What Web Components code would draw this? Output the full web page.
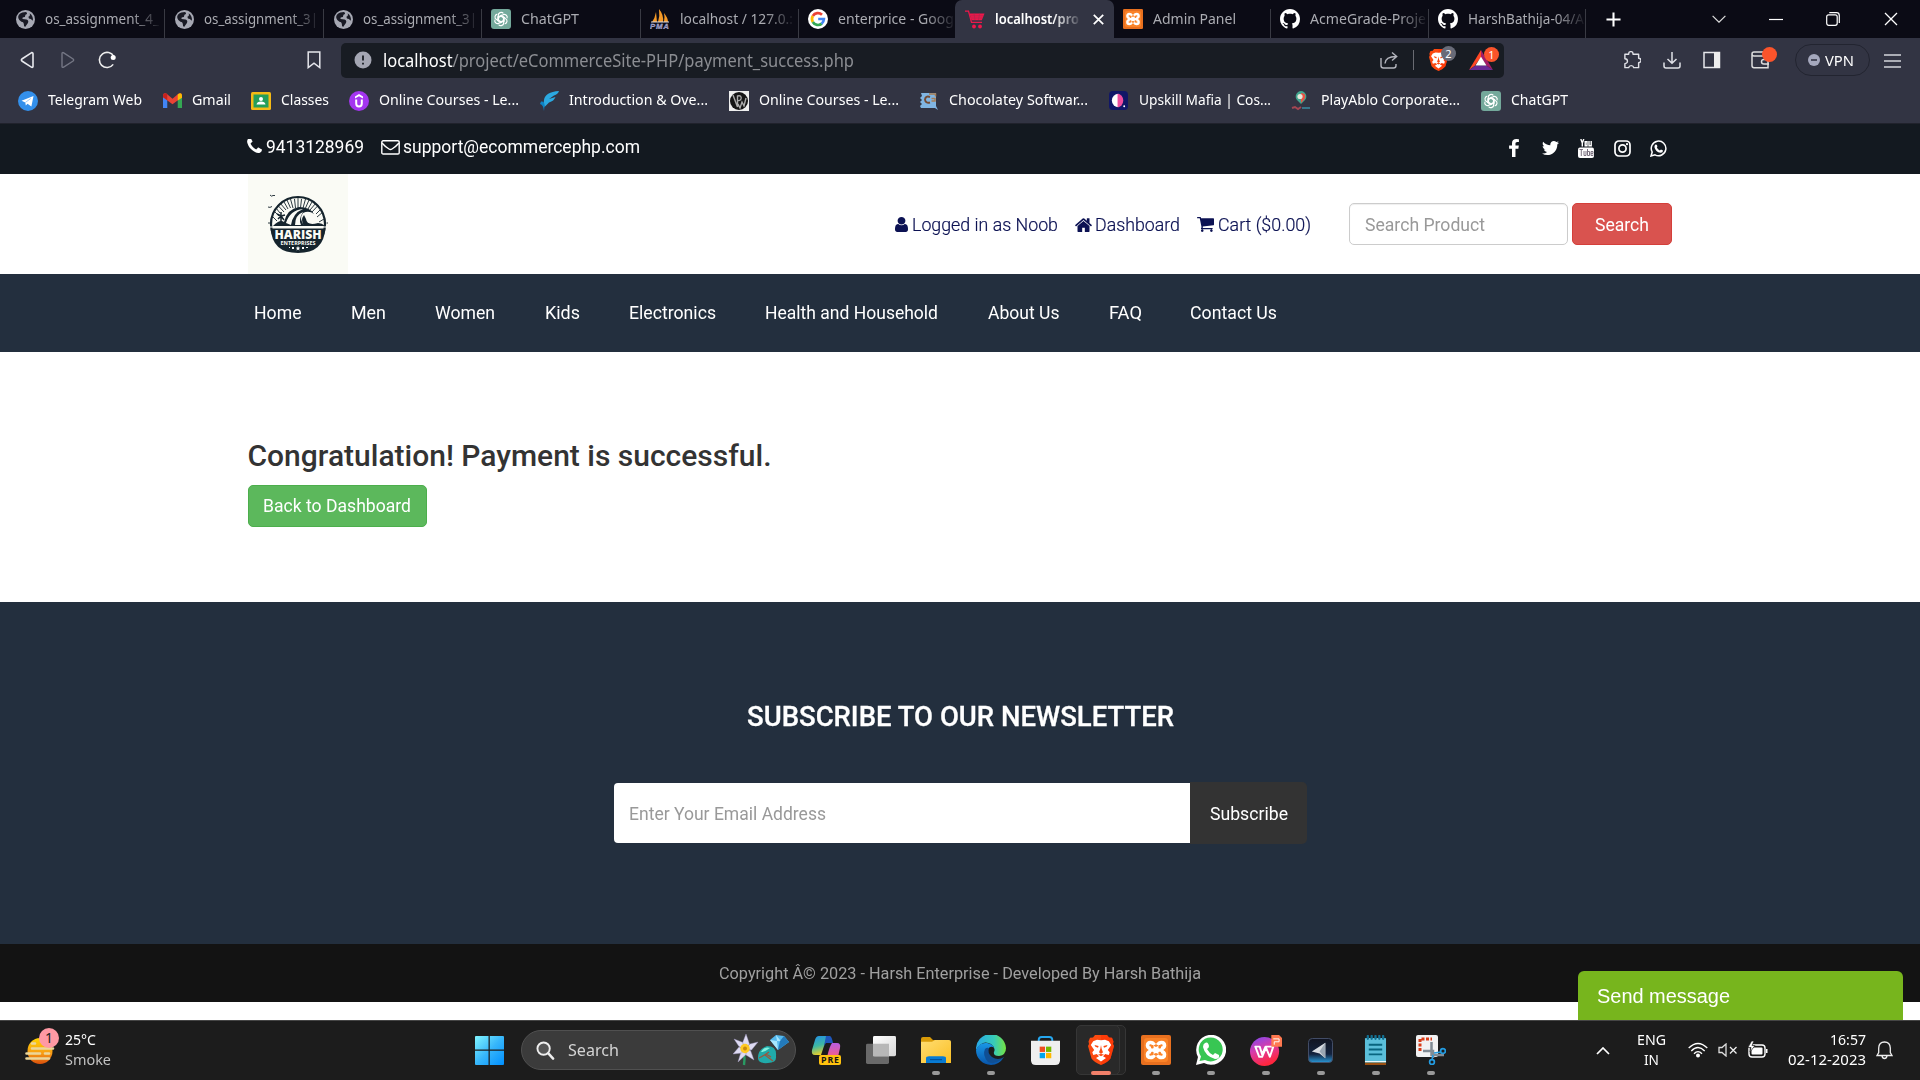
<!DOCTYPE html>
<html lang="en">
<head>
<meta charset="utf-8">
<title>localhost/project/eCommerceSite-PHP/payment_success.php</title>
<style>
html,body{margin:0;height:100%}
body{width:1920px;height:1080px;overflow:hidden;background:#fff;font-family:Roboto,sans-serif}
</style>
</head>
<body>
<desktop-screen></desktop-screen>
<script>
const ICONS = {
globe:['0 0 20 20','<circle cx="10" cy="10" r="10" fill="#a6a8b3"/><path d="M2.4 8.5Q1.6 4 6.6 2.5L10.5 2Q13 3.5 10 5L9.3 7.3Q6 7.4 7 9.6L11 10Q14 11 12.4 14L9.6 18Q8 17 8.2 14.4Q8 12.6 5.7 12.4Q3 11 2.4 8.5M14.3 3.4Q18.6 6.6 17.7 11.4L15.6 9.6Q13 9.5 13 7.2Q15.5 6.4 14.3 3.4" fill="#191a25"/>'],
gpt:['0 0 20 20','<rect width="20" height="20" rx="3" fill="#74a99b"/><g fill="none" stroke="#fff" stroke-width="1.15"><g id="k"><path d="M7.3 10.2V6.5A2.9 2.9 0 0 1 12.4 4.4M7.5 8.6L10.7 6.8L14 8.7"/></g><use href="#k" transform="rotate(60 10 10)"/><use href="#k" transform="rotate(120 10 10)"/><use href="#k" transform="rotate(180 10 10)"/><use href="#k" transform="rotate(240 10 10)"/><use href="#k" transform="rotate(300 10 10)"/></g>'],
pma:['0 0 20 20','<path d="M2 13Q5 9 6 3L7 13zM8 13Q10 7 9 0Q14 6 13 13zM14 13Q15 8 14 4Q18 9 18 13z" fill="#f59a27"/><path d="M1 13H19" stroke="#d9dae8" stroke-width="1"/><text x="0" y="20" font-family="Liberation Sans" font-weight="700" font-size="7.8" font-style="italic" fill="#7476a8" stroke="#c9c9e5" stroke-width=".3" textLength="19">PMA</text>'],
google:['0 0 20 20','<circle cx="10" cy="10" r="10" fill="#fff"/><g fill="none" stroke-width="2.7"><path d="M14 5.7A6 6 0 0 0 4.8 7" stroke="#ea4335"/><path d="M4.8 7A6 6 0 0 0 4.8 13" stroke="#fbbc05"/><path d="M4.8 13A6 6 0 0 0 13.8 14.6" stroke="#34a853"/><path d="M13.6 14.7Q15.8 13 15.9 10H10.2" stroke="#4285f4"/></g>'],
redcart:['0 0 20 20','<path d="M0 2.200H3.500L6.500 13.300H17" fill="none" stroke="#ee174b" stroke-width="1.300"/><path d="M4.500 4.500H19.500L16.800 11.300H6.500z" fill="#ee174b"/><path d="M5.500 6.800H18.500M6 9H17.500M9 4.500L10 11M14.500 4.500L13.500 11" stroke="#a9284d" stroke-width=".6"/><circle cx="9" cy="17.500" r="1.900" fill="#ee174b"/><circle cx="15" cy="17.500" r="1.900" fill="#ee174b"/>'],
xampp:['0 0 30 30','<rect width="30" height="30" rx="2" fill="#e8701f"/><rect x="3" y="3" width="24" height="24" rx="3" fill="#fb8328"/><path d="M10.2 11.2Q15 17 19.8 11.2M10.2 18.8Q15 13 19.8 18.8M10 15H20" stroke="#fff" stroke-width="4.2" fill="none"/><g fill="none" stroke="#fff" stroke-width="3.6"><path d="M13 14L10.5 14Q6.5 13 6.5 10.5Q6.5 7.5 9.5 7.5Q12 7.5 13.5 10M17 14L19.5 14Q23.5 13 23.5 10.5Q23.5 7.5 20.5 7.5Q18 7.5 16.5 10M13 16L10.5 16Q6.5 17 6.5 19.5Q6.5 22.5 9.5 22.5Q12 22.5 13.5 20M17 16L19.5 16Q23.5 17 23.5 19.5Q23.5 22.5 20.5 22.5Q18 22.5 16.5 20"/></g><rect x="10" y="10" width="2.6" height="3.4" rx="1" fill="#fb8328"/><rect x="17.4" y="10" width="2.6" height="3.4" rx="1" fill="#fb8328"/><rect x="10" y="16.8" width="2.6" height="3.4" rx="1" fill="#fb8328"/><rect x="17.4" y="16.8" width="2.6" height="3.4" rx="1" fill="#fb8328"/>'],
github:['0 0 16 16','<path fill="#fff" d="M8 0C3.58 0 0 3.58 0 8c0 3.54 2.29 6.53 5.47 7.59.4.07.55-.17.55-.38 0-.19-.01-.82-.01-1.49-2.01.37-2.53-.49-2.69-.94-.09-.23-.48-.94-.82-1.13-.28-.15-.68-.52-.01-.53.63-.01 1.08.58 1.23.82.72 1.21 1.87.87 2.33.66.07-.52.28-.87.51-1.07-1.78-.2-3.64-.89-3.64-3.95 0-.87.31-1.59.82-2.15-.08-.2-.36-1.02.08-2.12 0 0 .67-.21 2.2.82.64-.18 1.32-.27 2-.27s1.36.09 2 .27c1.53-1.04 2.2-.82 2.2-.82.44 1.1.16 1.92.08 2.12.51.56.82 1.27.82 2.15 0 3.07-1.87 3.75-3.65 3.95.29.25.54.73.54 1.48 0 1.07-.01 1.93-.01 2.2 0 .21.15.46.55.38A8.01 8.01 0 0 0 16 8c0-4.42-3.58-8-8-8"/>'],
close:['0 0 14 14','<path d="M1 1L13 13M13 1L1 13" stroke="currentColor" stroke-width="var(--sw,1.3)"/>'],
plus:['0 0 16 16','<path d="M8 .5V15.5M.5 8H15.5" stroke="#fff" stroke-width="2.2"/>'],
chev:['0 0 14 8','<path d="M.6 .8L7 7.2L13.4 .8" stroke="#ddd" stroke-width="1.2" fill="none"/>'],
min:['0 0 14 14','<path d="M0 7.5H14" stroke="#fff" stroke-width="1.2"/>'],
restore:['0 0 14 14','<path d="M3.3 .7H10.5Q13.3 .7 13.3 3.5V11" stroke="#fff" stroke-width="1.2" fill="none"/><rect x=".7" y="2.8" width="10.5" height="10.5" rx="2" stroke="#fff" stroke-width="1.2" fill="none"/>'],
back:['0 0 14 18','<path d="M11.7 1.6L1.9 8Q.8 9 1.9 10L11.7 16.3Q13 16.6 13 15.2V2.7Q13 1.4 11.7 1.6z" stroke="#e8e9ee" stroke-width="1.6" fill="none"/>'],
fwd:['0 0 14 18','<path d="M2.3 1.6L12.1 8Q13.2 9 12.1 10L2.3 16.3Q1 16.6 1 15.2V2.7Q1 1.4 2.3 1.6z" stroke="#747684" stroke-width="1.4" fill="none"/>'],
reload:['0 0 18 18','<path d="M15.8 5.5A7.6 7.6 0 1 0 15.2 13.4" stroke="#eee" stroke-width="1.6" fill="none"/><circle cx="15.2" cy="6.6" r="2.5" fill="#fff"/>'],
mark:['0 0 14 18','<path d="M1.2 1H12.8V16.6L7 12.2L1.2 16.6z" stroke="#e5e6ec" stroke-width="1.5" fill="none"/>'],
info:['0 0 18 18','<circle cx="9" cy="9" r="8.5" fill="#a4a6b3"/><path d="M9 4.5V9.6M9 11.7V13.6" stroke="#181c23" stroke-width="1.8"/>'],
share:['0 0 18 18','<path d="M1 7V14.5Q1 17 3.500 17H13.500Q16 17 16 14.500V13M5 12.500Q5.500 5.500 16 5.500M12 1.500L16.700 5.500L12 9.500" stroke="#b3b5bd" stroke-width="1.400" fill="none"/>'],
lion:['0 0 26 30','<path d="M7 0H19L21 2.500L24 2.800L25.500 6.500L25 9L26 11L22.500 23.500Q20 27 13 30Q6 27 3.500 23.500L0 11L1 9L.500 6.500L2 2.800L5 2.500z" fill="#fb4a10"/><path d="M13 0H19L21 2.500L24 2.800L25.500 6.500L25 9L26 11L22.500 23.500Q20 27 13 30z" fill="#ff2c00" opacity=".5"/><path d="M13 5.200L17 4.700L20.800 6.200L23.200 10L19.800 15L21.700 17.300L20.700 20L17.200 19L15 21.200L18 23L13 26.500L8 23L11 21.200L8.800 19L5.300 20L4.300 17.300L6.200 15L2.800 10L5.200 6.200L9 4.700z" fill="#fff"/><path d="M6.500 9.900L10.600 10.900L10 12.800L7.400 11.700zM19.500 9.900L15.400 10.900L16 12.800L18.600 11.700zM12.300 14L11 17.300L13 18.900L15 17.300L13.700 14L13 10zM10 19.500L13 18.900L16 19.500L13 21.200z" fill="#fb4a10"/>'],
bat:['0 0 24 22','<path d="M12 0V8L5.600 17.500L0 22z" fill="#ff4724"/><path d="M0 22L6.500 17H17.500L24 22z" fill="#692a96"/><path d="M12 0L24 22L17.500 17L12 8z" fill="#a31c67"/><path d="M12 7.500L17.500 17H6.500z" fill="#fff"/>'],
puzzle:['0 0 19 20','<path d="M2 3.600H6V3A2.300 2.300 0 0 1 10.600 3V3.600H16.500V8A2.500 2.500 0 0 1 16.500 13V18.500H11.300A2.700 2.700 0 0 0 6 18.500H2V14A2.600 2.600 0 0 0 2 8.600z" stroke="#e0e1e7" stroke-width="1.500" fill="none" stroke-linejoin="round"/>'],
down:['0 0 18 18','<path d="M9 1V12M4.500 8L9 12.300L13.500 8M1 11.500V15Q1 17 3 17H15Q17 17 17 15V11.500" stroke="#e0e1e7" stroke-width="1.500" fill="none"/>'],
side:['0 0 18 18','<rect x="1" y="1.500" width="15.500" height="15" fill="none" stroke="#e6e6eb" stroke-width="1.500"/><path d="M11 1H17V17H11z" fill="#eee"/>'],
wallet:['0 0 19 18','<path d="M15.500 5V2.500Q15.500 1 14 1H3Q1 1 1 3V14.500Q1 16.700 3 16.700H17V5H3Q1 5 1 3M18 8.500H13Q10.500 8.500 10.500 10.700T13 13H18" stroke="#ddd" stroke-width="1.500" fill="none"/>'],
vpn:['0 0 12 12','<circle cx="6" cy="6" r="6" fill="#a5a8bd"/><path d="M3 6H9" stroke="#323443" stroke-width="1.600"/>'],
menu:['0 0 17 14','<path d="M0 1H17M0 7H17M0 13H17" stroke="#d4d5db" stroke-width="1.500"/>'],
telegram:['0 0 20 20','<circle cx="10" cy="10" r="10" fill="#3390ec"/><path d="M3.500 9.700L15.500 5L13.400 15.500L9.500 12.700L7.800 14.500L7.300 11.400z" fill="#fff"/><path d="M7.300 11.500L12.800 7.500" stroke="#8dbff4" stroke-width=".8"/>'],
gmail:['0 0 20 16','<path d="M0 2.500V16H4.500V6z" fill="#4285f4"/><path d="M20 2.500V16H15.500V6z" fill="#34a853"/><path d="M0 2.500Q.500-.600 3.500.600L10 6L16.500.600Q19.500-.600 20 2.500V4.500L10 12L0 4.500z" fill="#ea4335"/><path d="M15.500 1.500Q19.500-1.500 20 2.500V5L15.500 8z" fill="#fbbc04"/><path d="M0 2.500Q.500-.600 3.500.600L4.500 1.500V7.800L0 4.500z" fill="#c5221f"/>'],
classes:['0 0 20 18','<rect width="20" height="18" rx="1.500" fill="#f5ba15"/><rect x="2.500" y="2.500" width="15" height="13" fill="#259e5a"/><circle cx="10" cy="7" r="2" fill="#fff"/><path d="M5.500 12.500Q6 9.500 10 9.500T14.500 12.500z" fill="#fff"/>'],
udemy:['0 0 20 20','<circle cx="10" cy="10" r="10" fill="#a435f0"/><path d="M10 3L14 5.500V7.500L10 5.200L6 7.500V5.500z" fill="#fff"/><path d="M7.200 8.500V12.500Q7.200 15.500 10 15.500T12.800 12.500V8.500" fill="none" stroke="#fff" stroke-width="2"/>'],
intro:['0 0 20 20','<path d="M4 9Q5 1 19 0Q18 3 14 4.500L9 8L15.500 6Q14 10 9 11.500L4.500 16Q3 12 4 9" fill="#2ba9e1"/><path d="M1 10.500Q5 10 4.500 15L4 20Q3.500 14 0 13z" fill="#0e83c4"/>'],
wp:['0 0 20 20','<rect width="20" height="20" fill="#eee"/><circle cx="10" cy="10" r="9" fill="#151515"/><path d="M4 4L8.500 16V5Q13 4 12 8Q11 10 9 9.500M9 13L11 17L13 11L15 15L17 7" fill="none" stroke="#aaa" stroke-width="1.400"/>'],
choco:['0 0 20 20','<path d="M2 2H17V15L19 19L16 17H2L1 15L3 13L1 11L3 9L1 7L3 5z" fill="#80b5e3"/><path d="M11 6Q6.500 4.500 6 8.500Q6.500 12.500 11 11.500" fill="none" stroke="#744b34" stroke-width="2"/><path d="M10 3H16.500V5.500M12.500 7.500H16V10H12.500" fill="none" stroke="#a77c53" stroke-width="1.500"/>'],
upskill:['0 0 20 20','<rect width="20" height="20" rx="4" fill="#101667"/><path d="M10 3A7 7 0 0 0 10 17z" fill="#fff"/><path d="M9 3A6 7 0 0 1 9 17z" fill="#ef4c9e"/><circle cx="16" cy="16" r="1" fill="#fff"/>'],
play:['0 0 20 20','<path d="M10 0A5.500 5.500 0 0 1 14 9L10 13L6 9A5.500 5.500 0 0 1 10 0" fill="#42a68f"/><path d="M10 2Q16 2 13.500 8L10 12z" fill="#eb5144"/><circle cx="9" cy="5.500" r="2.600" fill="#e5e9db"/><path d="M1 17L4 16L7 18L10 16" stroke="#a44652" stroke-width="2" fill="none"/><path d="M11 17H19" stroke="#38758b" stroke-width="2"/>'],
phone:['180 240 1430 1300','<path fill="currentColor" d="M1600 1240q0 27-10 70.500t-21 68.500q-21 50-122 106-94 51-186 51-27 0-53-3.500t-57.500-12.500-47-14.500-55.500-20.500-49-18q-98-35-175-83-127-79-264-216t-216-264q-48-77-83-175-3-9-18-49t-20.500-55.500-14.500-47-12.500-57.500-3.500-53q0-92 51-186 56-101 106-122 25-11 68.500-21t70.500-10q14 0 21 3 18 6 53 76 11 19 30 54t35 63.500 31 53.500q3 4 17.500 25t21.500 35.500 7 28.500q0 20-28.500 50t-62 55-62 53-28.500 46q0 9 5 22.500t8.500 20.500 14 24 11.500 19q76 137 174 235t235 174q2 1 19 11.500t24 14 20.500 8.500 22.500 5q18 0 46-28.500t53-62 55-62 50-28.500q14 0 28.500 7t35.500 21.500 25 17.500q25 15 53.500 31t63.500 35 54 30q70 35 76 53 3 7 3 21z"/>'],
mail:['0 0 19 15','<rect x=".8" y=".8" width="17.400" height="13.200" rx="1.300" fill="none" stroke="#fff" stroke-width="1.400"/><path d="M1 3Q4 6.500 8 9Q9.500 10 11 9Q15 6.500 18 3" fill="none" stroke="#fff" stroke-width="1.400"/>'],
fb:['470 0 880 1664','<path fill="#fff" d="M1343 12v264h-157q-86 0-116 36t-30 108v189h293l-39 296h-254v759h-306v-759h-255v-296h255v-218q0-186 104-288.500t277-102.500q147 0 228 12z"/>'],
twitter:['108 256 1576 1280','<path fill="#fff" d="M1684 408q-67 98-162 167 1 14 1 42 0 130-38 259.500t-115.500 248.500-184.500 210.500-258 146-323 54.500q-271 0-496-145 35 4 78 4 225 0 401-138-105-2-188-64.500t-114-159.500q33 5 61 5 43 0 85-11-112-23-185.500-111.500t-73.500-205.500v-4q68 38 146 41-66-44-105-115t-39-154q0-88 44-163 121 149 294.500 238.500t371.500 99.500q-8-38-8-74 0-134 94.500-228.500t228.500-94.500q140 0 236 102 109-21 205-78-37 115-142 178 93-10 186-50z"/>'],
yt:['0 0 16 19','<g stroke="#fff" stroke-width="1.400" fill="none"><path d="M2.800 0L4.300 4V7.500M5.800 0L4.300 4M7.200 2.700H9V6.800H7.200zM11 2V6.800H13.200M13.200 2V7.500"/></g><rect y="8.500" width="16" height="10.500" rx="2" fill="#fff"/><g stroke="#7c7382" stroke-width="1" fill="none"><path d="M1.500 10.500H5M3.300 10.500V17M6 12V16.500H8V12M9.500 10V16.500H11.500V12.500H9.500M15 15.500V16.500H13V12.500H15V14.500H13"/></g>'],
insta:['0 0 17 17','<rect x="1" y="1" width="15" height="15" rx="4" fill="none" stroke="#fff" stroke-width="1.700"/><circle cx="8.500" cy="8.500" r="3.600" fill="none" stroke="#fff" stroke-width="1.700"/><circle cx="13" cy="4.200" r="1.100" fill="#fff"/>'],
wa:['0 0 17 17','<path d="M1 16L2.200 12A7.300 7.300 0 1 1 5 14.800z" fill="none" stroke="#fff" stroke-width="1.500"/><path d="M5.500 4.500Q7 4 7.300 6Q7.400 7 6.800 7.600Q7.800 9.600 9.800 10.500L11 9.500L13 10.500Q13 13 10.500 12.800Q5.500 12 4.400 7Q4.500 5 5.500 4.500" fill="#fff"/>'],
user:['256 128 1280 1536','<path fill="currentColor" d="M1536 1399q0 109-62.500 187t-150.500 78h-854q-88 0-150.500-78t-62.500-187q0-85 8.500-160.500t31.500-152 58.500-131 94-89 134.500-34.500q131 128 313 128t313-128q76 0 134.500 34.500t94 89 58.500 131 31.500 152 8.500 160.500zm-256-887q0 159-112.500 271.500t-271.500 112.500-271.500-112.500-112.500-271.500 112.500-271.500 271.500-112.500 271.500 112.500 112.500 271.500z"/>'],
home:['80 240 1632 1296','<path fill="currentColor" d="M1472 992v480q0 26-19 45t-45 19h-384v-384h-256v384h-384q-26 0-45-19t-19-45v-480q0-1 .5-3t.5-3l575-474 575 474q1 2 1 6zm223-69l-62 74q-8 9-21 11h-3q-13 0-21-7l-692-577-692 577q-12 8-24 7-13-2-21-11l-62-74q-8-10-7-23.500t11-21.500l719-599q32-26 76-26t76 26l244 204v-195q0-14 9-23t23-9h192q14 0 23 9t9 23v408l219 182q10 8 11 21.500t-7 23.500z"/>'],
cart:['64 256 1664 1408','<path fill="currentColor" d="M704 1536q0 52-38 90t-90 38-90-38-38-90 38-90 90-38 90 38 38 90zm896 0q0 52-38 90t-90 38-90-38-38-90 38-90 90-38 90 38 38 90zm128-1088v512q0 24-16.500 42.500t-40.500 21.500l-1044 122q13 60 13 70 0 16-24 64h920q26 0 45 19t19 45-19 45-45 19h-1024q-26 0-45-19t-19-45q0-11 8-31.500t16-36 21.500-40 15.500-29.500l-177-823h-204q-26 0-45-19t-19-45 19-45 45-19h256q16 0 28.500 6.500t19.500 15.500 13 24.500 8 26 5.500 29.500 4.500 26h1201q26 0 45 19t19 45z"/>'],
logo:['0 0 100 100','<rect width="100" height="100" fill="#fafbf5"/><g stroke="#15242d" fill="none"><circle cx="50" cy="50" r="27" stroke-width="2.200"/><path d="M50 34V24M45 34L42.500 25M55 34L57.500 25M40 35L35.500 27M60 35L64.500 27M36 38L29.500 31M64 38L70.500 31M31 42L26 37M69 43L75 38M29 47L25 43M71 48L76 45M47.500 34L46.500 25M52.500 34L53.500 25M42.500 34L39 26M57.500 34L61 26M38 36L32 29M62 36L68 29M32 39L28 34M68 40L73 35" stroke-width=".900"/><path d="M22 21Q23.500 23 25 21.500L27 21.500M20 33Q22 34 24 32.500M20 49H22M78.500 49H80" stroke-width=".900"/><path d="M33 51V43M33 42L29 40M33 42L30 45M33 42L37 41M33 42L36 46M33 41V38" stroke-width="1.500"/></g><path d="M25 52Q32 45 36 48Q39 35 51 33Q62 33 66 40Q61 36 55 39Q50 45 57 52z" fill="#15242d"/><path d="M38 49Q42 36 55 35Q45 39 43 51M47 51Q47 41 55 38Q50 46 53 51M60 50Q55 43 61 42Q67 43 65 47L76 50z" fill="#fafbf5"/><path d="M58 45Q59 52 70 49Q74 49 77 52H56Q52 46 56 41" fill="#15242d"/><path d="M22.800 54.500H77.200Q76 79 50 79T22.800 54.500" fill="#15242d"/><path d="M22 53H78" stroke="#fafbf5" stroke-width="1"/><text x="26.500" y="64.800" font-family="Open Sans" font-weight="800" font-size="11.500" fill="#fafbf5" textLength="47" lengthAdjust="spacingAndGlyphs">HARISH</text><text x="32.500" y="70.600" font-family="Open Sans" font-weight="700" font-size="4.700" fill="#fafbf5" textLength="35" lengthAdjust="spacingAndGlyphs">ENTERPRISES</text><path d="M50 72L50.700 73.600L52.300 73.700L51 74.800L51.500 76.500L50 75.500L48.500 76.500L49 74.800L47.700 73.700L49.300 73.600zM41 73H42V74H41zM44 73H46V75H44zM54 73H56V75H54zM58 73H60V74H58z" fill="#fff"/>'],
weather:['0 0 34 38','<defs><linearGradient id="s" x2="0" y2="1"><stop stop-color="#ffd400"/><stop offset=".6" stop-color="#f79b16"/><stop offset="1" stop-color="#d94f0c"/></linearGradient></defs><ellipse cx="15" cy="24" rx="12.500" ry="13" fill="url(#s)"/><g stroke="#ecd69a" stroke-width="2.600" stroke-linecap="round"><path d="M7 16.500H10M7 21.500H28M1.500 26.500H15M20 26.500H24M1.500 31.500H24"/></g>'],
win:['0 0 30 30','<defs><linearGradient id="w" gradientUnits="userSpaceOnUse" x1="0" y1="0" x2="30" y2="30"><stop stop-color="#81f5ff"/><stop offset=".5" stop-color="#37b6fa"/><stop offset="1" stop-color="#008fff"/></linearGradient></defs><path d="M1 0H14V14H0V1Q0 0 1 0M15.300 0H29Q30 0 30 1V14H15.300zM0 15.300H14V30H1Q0 30 0 29zM15.300 15.300H30V29Q30 30 29 30H15.300z" fill="url(#w)"/>'],
search:['0 0 20 20','<circle cx="8" cy="8" r="6.500" fill="#555" stroke="#eee" stroke-width="2"/><path d="M13 13L18 18.500" stroke="#eee" stroke-width="2.600" stroke-linecap="round"/>'],
flower:['0 0 56 32','<path d="M11 18Q12 25 11 31" stroke="#2a9b63" stroke-width="2.400" fill="none"/><g fill="#dedbf2" stroke="#9f98c2" stroke-width=".4"><path d="M13 0L16.500 10L12 15L9.500 9zM1 5L10 8.500L12 15L6 12.500zM25 8L18.500 16L12 15L17 10zM0 20L6 13L12 15L9 19zM5 28L8 18L12 15L13.500 20zM21 26L13 21L12 15L17.500 16.500z"/></g><circle cx="12" cy="14.500" r="4.700" fill="#ffc923"/><circle cx="12" cy="14.500" r="2" fill="#c88a0e"/><path d="M37 6L43 1L51 2L56 8L45 16z" fill="#55b9ee"/><path d="M37 6L44 7L45 16zM43 1L47 6L56 8L44 7z" fill="#a7e7ff"/><path d="M51 2L56 8L45 16L47 7z" fill="#237abb"/><path d="M25 24Q25 15 34 12Q44 12 43 22Q44 29 35 29Q25 30 25 24" fill="#20aaa9"/><path d="M28 18Q31 12 37 14Q32 18 28 18" fill="#83f2df"/><path d="M26 24Q32 21 36 18M33 20L38 23M32 21L40 27" stroke="#99573d" stroke-width="1.200" fill="none"/>'],
copilot:['0 0 30 30','<defs><linearGradient id="c" x2=".3" y2="1"><stop stop-color="#228fe8"/><stop offset=".55" stop-color="#3eb8a3"/><stop offset="1" stop-color="#e9cf2a"/></linearGradient><linearGradient id="d" x2="0" y2="1"><stop stop-color="#b85de2"/><stop offset="1" stop-color="#f45e88"/></linearGradient></defs><path d="M8 1H17Q20 2 21 8H14L10 20H4Q0 20 1 15L4 5Q5 1 8 1" fill="url(#c)"/><path d="M15 1H19Q21 2 22 8H15L13 11z" fill="#1e56bb"/><path d="M21 8H26Q30 8 29 13L27 22H16Q19 10 21 8" fill="url(#d)"/><rect x="8" y="20" width="22" height="10" rx="2" fill="#ffc20e"/><text x="10" y="28.200" font-family="Open Sans" font-weight="700" font-size="8.800" fill="#151515" textLength="18">PRE</text>'],
taskview:['0 0 30 30','<defs><linearGradient id="t" x2="1" y2="1"><stop stop-color="#fff"/><stop offset="1" stop-color="#d7d7d7"/></linearGradient></defs><rect y="8" width="23" height="21" rx="1.500" fill="#696969"/><rect x="7" width="23" height="21" rx="1.500" fill="url(#t)"/><path d="M7 8H23V21H7z" fill="#b7b7b7"/>'],
folder:['0 0 30 28','<defs><linearGradient id="f" x2="1" y2="1"><stop stop-color="#ffdd72"/><stop offset="1" stop-color="#fabf24"/></linearGradient></defs><path d="M0 2Q0 0 2 0H9L12 3H26Q29 3 29 6V14H0z" fill="#d99b08"/><path d="M0 5H11L14 3H28Q30 3 30 5V27H0z" fill="url(#f)"/><path d="M5 27V22Q5 20 8 20H22Q25 20 25 22V27z" fill="#087bd3"/><path d="M9 23.500H21" stroke="#04488d"/>'],
edge:['0 0 30 30','<defs><linearGradient id="e" x2="1"><stop stop-color="#27a8e8"/><stop offset=".6" stop-color="#37cbb9"/><stop offset="1" stop-color="#75e341"/></linearGradient><linearGradient id="g" x2="0" y2="1"><stop stop-color="#1998e7"/><stop offset="1" stop-color="#0854aa"/></linearGradient></defs><path d="M0 15A15 15 0 0 1 30 13Q30 20 23 21Q17 21 18 17Q20 13 15 9Q6 4 0 15" fill="url(#e)"/><path d="M0 15Q3 7 11 8Q17 9 18 13Q15 10 12 14Q10 23 18 25Q24 26 28 22Q23 30 15 30A15 15 0 0 1 0 15" fill="url(#g)"/><path d="M9 14Q6 20 12 27Q17 30 25 25L28 22Q22 26 16 22Q11 18 13 13Q11 12 9 14" fill="#104f94"/>'],
store:['0 0 30 30','<path d="M8 7V4Q8 1 11 1H19Q22 1 22 4V7" fill="none" stroke="#25a6ee" stroke-width="2"/><path d="M0 5H30V25Q30 30 25 30H5Q0 30 0 25z" fill="#efefef"/><path d="M9 11H14.500V16.500H9z" fill="#f04e20"/><path d="M15.500 11H21V16.500H15.500z" fill="#75b900"/><path d="M9 17.500H14.500V23H9z" fill="#00a5ed"/><path d="M15.500 17.500H21V23H15.500z" fill="#ffb800"/>'],
whatsapp:['0 0 30 30','<path d="M0 30L2 22A15 15 0 1 1 8 28z" fill="#fff"/><path d="M3.500 26L5 21.500A12 12 0 1 1 9 25z" fill="#38c653"/><path d="M9 8Q12 6 13 11Q13 13 11 14Q13 18 17 20L19 18L23 20Q24 24 19 24Q9 21 7 12Q7 9 9 8" fill="#fff"/>'],
wps:['0 0 33 32','<defs><linearGradient id="p" x2=".4" y2="1"><stop stop-color="#7b49f5"/><stop offset=".5" stop-color="#d93ca8"/><stop offset="1" stop-color="#ff263e"/></linearGradient></defs><circle cx="15" cy="17" r="15" fill="url(#p)"/><path d="M5.500 12H10L12.500 20L16 12H24L20.500 22.500L16.500 13L12.500 22.500H9.500z" fill="none" stroke="#fff" stroke-width="2" stroke-linejoin="round"/><path d="M22 0H30L33 3V12H22z" fill="#ff7950"/><path d="M24 4H30V7H25V10" fill="none" stroke="#fff"/>'],
arrow:['0 0 26 26','<defs><linearGradient id="a" x2="0" y2="1"><stop stop-color="#111421"/><stop offset=".65" stop-color="#14233f"/><stop offset="1" stop-color="#2999d8"/></linearGradient></defs><rect x=".5" y=".5" width="25" height="25" rx="4" fill="url(#a)" stroke="#46516b"/><path d="M4 14L18 5V21L12 16z" fill="#d9dce2"/><path d="M12 14L18 5V21z" fill="#9ca7b4"/>'],
notepad:['0 0 24 31','<rect x="1" y="3" width="22" height="27" rx="1" fill="#5bbfda"/><path d="M1 27H23V28H1z" fill="#fff"/><path d="M1 28.500H23V31H1z" fill="#9a5012"/><path d="M5 10H19M5 15H19M5 20H19" stroke="#08657f" stroke-width="2"/><path d="M4 1V4M8 1V4M12 1V4M16 1V4M20 1V4" stroke="#126f91" stroke-width="2.400" stroke-linecap="round"/>'],
snip:['0 0 30 30','<rect width="22" height="22" rx="2" fill="#f2f2f2"/><path d="M4 16V4H16" fill="none" stroke="#d83b17" stroke-width="3" stroke-dasharray="3 1.500"/><path d="M15.500 7V20H28M7 16H17V23" fill="none" stroke="#818b94" stroke-width="2.500"/><circle cx="27" cy="16" r="2.400" fill="none" stroke="#239ce2" stroke-width="1.700"/><circle cx="16" cy="27" r="2.400" fill="none" stroke="#239ce2" stroke-width="1.700"/><path d="M18 18L25 17M17 20L16 25" stroke="#239ce2" stroke-width="1.500"/>'],
up:['0 0 14 8','<path d="M1 7L7 1L13 7" stroke="#fff" stroke-width="1.700" fill="none"/>'],
wifi:['0 0 20 16','<g fill="none" stroke="#fff" stroke-width="1.300"><path d="M.7 6Q10-3 19.300 6M3.300 9Q10 2 16.700 9M6 11.700Q10 7.500 14 11.700"/></g><circle cx="10" cy="13.500" r="2" fill="#fff"/>'],
mute:['0 0 20 14','<path d="M1 4.500H4L8 1V13L4 9.500H1z" fill="none" stroke="#ddd" stroke-width="1.300"/><path d="M12 4L18.500 10.500M18.500 4L12 10.500" stroke="#eee" stroke-width="1.300"/>'],
battery:['0 0 20 17','<rect x="1" y="4" width="16" height="12" rx="3" fill="none" stroke="#fff" stroke-width="1.400"/><rect x="3.500" y="6.500" width="11" height="7" rx="1" fill="#fff"/><path d="M18 8H19.500V12H18z" fill="#fff"/><path d="M3.500 0L0 6.500H3L2 11L7 4.500H4L6 0z" fill="#fff" stroke="#1c1c1c" stroke-width=".7"/>'],
bell:['0 0 17 19','<path d="M1 14.500L2.700 11.500V7Q3 1 8.500 1T14.300 7V11.500L16 14.500zM6 15Q6.500 17.500 8.500 17.500T11 15" fill="none" stroke="#eee" stroke-width="1.300"/>']
};

class Base extends HTMLElement {
  constructor(){ super(); this.attachShadow({mode:'open'}); }
  a(n,d=''){ return this.getAttribute(n) ?? d; }
  connectedCallback(){ this.shadowRoot.innerHTML = this.render(); this.after?.(); }
}
const ic = (n,w,h,m=0,extra='') => `<ui-icon name="${n}" w="${w}" h="${h}" style="margin-left:${m}px;${extra}"></ui-icon>`;
const tx = (t,w,m=0,extra='') => `<fit-text w="${w}" style="margin-left:${m}px;${extra}">${t}</fit-text>`;

class DesktopScreen extends Base { render(){ return `<style>:host{display:flex;flex-direction:column;width:1920px;height:1080px;position:relative}
main{height:896px;background:#fff}chat-launcher{position:absolute;left:1578px;top:971px}</style>
<tab-strip></tab-strip><address-bar></address-bar><bookmark-bar></bookmark-bar>
<main><site-topbar></site-topbar><site-header></site-header><site-nav></site-nav><payment-message></payment-message><site-newsletter></site-newsletter><site-copyright></site-copyright></main>
<task-bar></task-bar><chat-launcher></chat-launcher>`; } }

class TabStrip extends Base { render(){
  const tabs=[['globe',19,159,114,'os_assignment_4_'],['globe',19,159,114,'os_assignment_3|'],['globe',19,158,114,'os_assignment_3|'],['gpt',20,159,58,'ChatGPT'],['pma',20,158,113,'localhost / 127.0.:'],['google',20,156,116,'enterprice - Goog'],['redcart',20,159,84,'localhost/pro'],['xampp',20,157,83,'Admin Panel'],['github',20,158,116,'AcmeGrade-Proje'],['github',20,157,116,'HarshBathija-04/A']];
  return `<style>:host{display:flex;align-items:center;height:38px;background:#0b0b15;padding-left:6px;box-sizing:border-box}</style>`+
  tabs.map(([i,s,w,t,l],n)=>`<browser-tab icon="${i}" size="${s}" w="${w}" tw="${t}" ${n==6?'active':''} ${n==3||n==7?'full':''} ${n==5?'nosep':''}>${l}</browser-tab>`).join('')+
  ic('plus',15,15,20)+ic('chev',14,8,91)+ic('min',14,14,43)+ic('restore',14,14,43)+ic('close',14,14,44,'color:#fff'); } }
class BrowserTab extends Base { render(){ const act=this.hasAttribute('active'),full=this.hasAttribute('full'),sep=!act&&!this.hasAttribute('nosep'),globe=this.a('icon')=='globe';
  return `<style>:host{display:flex;align-items:center;flex:none;box-sizing:border-box;height:38px;width:${this.a('w')}px;padding-left:${act||globe?10:9}px;font:${act?'600 ':''}15px/21px "Noto Sans",sans-serif;color:${act?'#fff':'#abacb2'};${act?'background:#323443;border-radius:7px 7px 0 0;':''}}
  .l{display:flex;flex:none;margin-left:10px;padding-bottom:2px;${full?'':`-webkit-mask-image:linear-gradient(90deg,#000 ${act?68:75}%,#0004 96%,#0001)`}}
  i{margin-left:auto;width:1px;height:29px;align-self:flex-end;background:#393a43}</style>${ic(this.a('icon'),this.a('size'),this.a('size'))}<span class="l"><fit-text w="${this.a('tw')}"><slot></slot></fit-text></span>${act?ic('close',11,11,14,'--sw:2.2'):''}${sep?'<i></i>':''}`; } }

class AddressBar extends Base { render(){ return `<style>:host{display:flex;align-items:center;height:45px;background:#323443;font-family:"Noto Sans",sans-serif}
  .url{display:flex;align-items:center;margin:0 0 1px 20px;width:1163px;height:35px;border-radius:5px;background:#181c23;font-size:17.500px;color:#8b8d92}
  b{font-weight:400;color:#fff}i{width:1px;height:20px;background:#696b72;margin-left:15px}
  .r{position:relative;display:flex}.bd{position:absolute;font:11px/15px "Noto Sans";color:#fff;text-align:center;width:15px;height:15px;border-radius:8px}
  .vpn{display:flex;align-items:center;box-sizing:border-box;width:75px;height:32px;margin:0 0 1px 25px;border:1px solid #222430;border-radius:16px;font-size:14.500px;color:#fff}</style>
  ${ic('back',14,18,20,'margin-bottom:1px')}${ic('fwd',14,18,27,'margin-bottom:1px')}${ic('reload',18,18,23,'margin-bottom:1px')}${ic('mark',14,18,191,'margin-bottom:1px')}
  <div class="url">${ic('info',18,18,13)}${tx('<b>localhost</b>/project/eCommerceSite-PHP/payment_success.php',471,11,'margin-bottom:1px')}
  ${ic('share',18,18,526)}<i></i><span class="r" style="margin-left:15px">${ic('lion',19,22)}<span class="bd" style="left:12px;top:-3px;background:#686b78">2</span></span>
  <span class="r" style="margin-left:21px">${ic('bat',24,20)}<span class="bd" style="left:15px;top:-3px;background:#fb542b">1</span></span></div>
  ${ic('puzzle',18,18,119,'margin-bottom:1px')}${ic('down',18,18,22,'margin-bottom:1px')}${ic('side',18,18,22,'margin-bottom:1px')}<span class="r" style="margin-left:30px;margin-bottom:1px">${ic('wallet',19,18)}<span class="bd" style="left:11px;top:-4px;background:#fb542b"></span></span>
  <div class="vpn">${ic('vpn',12,12,12)}${tx('VPN',29,5,'margin-bottom:1px')}</div>${ic('menu',17,14,14)}`; } }

class BookmarkBar extends Base { render(){
  const b=[['telegram',20,20,145,94,10,'Telegram Web'],['gmail',19,15,88,39,10,'Gmail'],['classes',20,18,98,48,10,'Classes'],['udemy',20,20,191,140,10,'Online Courses - Le...'],['intro',20,20,189,139,9,'Introduction &amp; Ove...'],['wp',20,20,190,140,10,'Online Courses - Le...'],['choco',20,20,190,139,9.500,'Chocolatey Softwar...'],['upskill',19,19,182,132,11,'Upskill Mafia | Cos...'],['play',20,20,190,139,10,'PlayAblo Corporate...'],['gpt',20,20,120,57,10,'ChatGPT']];
  return `<style>:host{display:flex;align-items:center;height:41px;box-sizing:border-box;padding:0 0 5px 18px;background:#323443;border-bottom:1px solid #20222c;font:15px/21px "Noto Sans",sans-serif;color:#fff}div{display:flex;align-items:center;flex:none}</style>`+
  b.map(([i,w,h,W,t,g,l])=>`<div style="width:${W}px">${ic(i,w,h)}${tx(l,t,g,'margin-bottom:2px')}</div>`).join(''); } }

class SiteTopbar extends Base { render(){ return `<style>:host{display:flex;align-items:center;height:50px;box-sizing:border-box;padding:0 253px 4px 247px;background:#131920;color:#fff;font-size:17.500px}.s{display:flex;align-items:center;margin-left:auto;padding-top:2px}</style>
  ${ic('phone',15,14,0,'margin-bottom:2px')}${tx('9413128969',98,3.500)}${ic('mail',19,15,17)}${tx('support@ecommercephp.com',237,3)}<div class="s">${ic('fb',10,18)}${ic('twitter',17,14,23)}${ic('yt',16,19,19)}${ic('insta',17,17,20)}${ic('wa',17,17,19)}</div>`; } }
class SiteHeader extends Base { render(){ return `<style>:host{display:flex;align-items:center;height:100px;padding:0 248px;color:#0c1253;font-size:17.500px;font-weight:300}
  .n{display:flex;align-items:center;padding-top:2px;-webkit-text-stroke:.2px #0c1253}.n ui-icon{margin-bottom:1px}
  .in{display:flex;align-items:center;box-sizing:border-box;width:219px;height:42px;margin-left:38px;padding-top:1px;border:1px solid #ccc;border-radius:5px;box-shadow:inset 0 1px 1px #0001;color:#999;font-weight:400}
  .btn{display:flex;align-items:center;justify-content:center;box-sizing:border-box;width:100px;height:42px;margin-left:4px;padding-top:1px;background:#d9534f;border:1px solid #d43f3a;border-radius:5px;color:#fff;font-weight:400}</style>
  ${ic('logo',100,100)}<div class="n" style="margin-left:547px">${ic('user',13,15)}${tx('Logged in as Noob',146,3.500)}${ic('home',17,14,17)}${tx('Dashboard',85,3.500)}${ic('cart',17,15,17)}${tx('Cart ($0.00)',93,3.500)}</div><div class="in">${tx('Search Product',120,15)}</div><div class="btn">${tx('Search',54)}</div>`; } }
class SiteNav extends Base { render(){ const l=[['Home',47.500,253.500],['Men',35,49.500],['Women',60,49.500],['Kids',35,49.500],['Electronics',87,49],['Health and Household',173,49.500],['About Us',71.500,49.500],['FAQ',33,49.500],['Contact Us',87,48.500]];
  return `<style>:host{display:flex;align-items:center;height:78px;background:#232f3e;color:#fff;font-size:17.500px}</style>`+l.map(([t,w,m])=>tx(t,w,m)).join(''); } }
class PaymentMessage extends Base { render(){ return `<style>:host{display:block;height:250px;box-sizing:border-box;padding:87px 248px 0}h3{display:flex;margin:0;font:500 30px/33px Roboto;color:#333;height:46px}
  .btn{display:flex;align-items:center;justify-content:center;box-sizing:border-box;width:179px;height:42px;background:#5cb85c;border:1px solid #4cae4c;border-radius:5px;font-size:17.500px;color:#fff}</style><h3>${tx('Congratulation! Payment is successful.',524,-.5)}</h3><div class="btn">${tx('Back to Dashboard',148,-1)}</div>`; } }
class SiteNewsletter extends Base { render(){ return `<style>:host{display:flex;flex-direction:column;align-items:center;height:342px;box-sizing:border-box;padding-top:98px;background:#232f3e}
  h2{display:flex;margin:0;height:82px;font:500 28px/33px Roboto;color:#fff;-webkit-text-stroke:.3px #fff}.f{display:flex;align-items:center;width:693px;height:62px;font-size:17.500px}
  .in{display:flex;align-items:center;width:576px;height:60px;background:#fff;border-radius:4px 0 0 4px;color:#999}.btn{display:flex;align-items:center;justify-content:center;width:117px;height:62px;background:#333;border-radius:0 5px 5px 0;color:#fff}
  .in fit-text,.btn fit-text{padding-top:1px}</style>
  <h2>${tx('SUBSCRIBE TO OUR NEWSLETTER',427)}</h2><div class="f"><div class="in">${tx('Enter Your Email Address',197,15.500)}</div><div class="btn">${tx('Subscribe',78,1)}</div></div>`; } }
class SiteCopyright extends Base { render(){ return `<style>:host{display:flex;align-items:center;justify-content:center;height:58px;background:#131313;color:#a0a0a0;font-size:16.250px}</style>${tx('Copyright Â© 2023 - Harsh Enterprise - Developed By Harsh Bathija',482)}`; } }
class ChatLauncher extends Base { render(){ return `<style>:host{display:flex;align-items:center;box-sizing:border-box;width:325px;height:49px;padding-top:1px;background:#77b51d;border-radius:6px 6px 0 0;color:#fff;font:20px "Liberation Sans",sans-serif}</style>${tx('Send message',133,19)}`; } }

class TaskBar extends Base { render(){
  const apps=[['copilot',30,30,0],['taskview',30,29,0],['folder',30,27,1],['edge',30,30,1],['store',29,29,0],['lion',26,30,2],['xampp',30,30,1],['whatsapp',30,30,1],['wps',32,31,1],['arrow',25,25,1],['notepad',23,30,1],['snip',30,30,1]];
  return `<style>:host{display:flex;align-items:center;height:60px;box-sizing:border-box;background:#1c1c1c;border-top:1px solid #454545;font:15px/20px "Noto Sans",sans-serif;color:#fff}
  .w{position:relative;display:flex;margin-left:25px}.bd{position:absolute;left:14px;top:-7px;width:20px;height:20px;border-radius:10px;background:#ff99a4;color:#222;text-align:center;font-size:14px}
  .c{display:flex;flex-direction:column;padding-bottom:4px}.s{display:flex;align-items:center;box-sizing:border-box;width:275px;height:40px;margin:0 0 1px 17px;border:1px solid #505050;border-radius:20px;background:#3b3b3b;font-size:17px;color:#d4d4d4}
  .apps{display:flex;margin-left:2px}</style>
  <div class="w">${ic('weather',34,38,0,'margin-top:-9px')}<span class="bd" style="top:-8px">1</span></div><div class="c" style="margin-left:5.500px">${tx('25°C',31)}${tx('Smoke',46,0,'color:#c2c2c2')}</div>
  ${ic('win',29,29,364.5)}<div class="s">${ic('search',19,19,14)}${tx('Search',51,12.500,'margin-bottom:1px')}${ic('flower',56,32,114.5)}</div>
  <div class="apps">${apps.map(([i,w,h,s])=>`<task-app icon="${i}" w="${w}" h="${h}" state="${s}"></task-app>`).join('')}</div>
  ${ic('up',14,8,138)}<div class="c" style="margin-left:26.500px;align-items:center">${tx('ENG',29)}${tx('IN',15)}</div>${ic('wifi',20,16,22,'margin-bottom:1px')}${ic('mute',20,14,10,'margin-bottom:1px')}${ic('battery',20,17,10,'margin-bottom:3px')}
  <div class="c" style="margin-left:20.500px;align-items:flex-end">${tx('16:57',36)}${tx('02-12-2023',78)}</div>${ic('bell',17,19,10)}`; } }
class TaskApp extends Base { render(){ const s=+this.a('state'); return `<style>:host{position:relative;display:flex;align-items:center;justify-content:center;box-sizing:border-box;padding-bottom:1px;width:55px;height:59px}
  .bg{position:absolute;top:4px;left:3px;box-sizing:border-box;height:50px;width:44px;background:#292929;border:1px solid #363636;border-radius:5px}.b2{left:31px;width:22px;background:#242424}
  .p{position:absolute;bottom:5px;height:4px;border-radius:2px;background:${s==2?'#f1806a':'#999'};width:${s==2?20:8}px}ui-icon{position:relative}</style>${s==2?'<span class="bg b2"></span><span class="bg"></span>':''}${ic(this.a('icon'),this.a('w'),this.a('h'))}${s?'<span class="p"></span>':''}`; } }

class UiIcon extends Base { render(){ const [vb,d]=ICONS[this.a('name')]; return `<style>:host{display:inline-flex;flex:none;width:${this.a('w')}px;height:${this.a('h')}px}svg{display:block;width:100%;height:100%}</style><svg viewBox="${vb}" preserveAspectRatio="none">${d}</svg>`; } }

// Text run scaled horizontally so that it fills exactly the width given in "w".
class FitText extends Base {
  render(){ return `<style>:host{display:block;flex:none;width:${this.a('w')}px;white-space:nowrap}span{display:inline-block;transform-origin:0 50%}</style><span><slot></slot></span>`; }
  after(){ const s=this.shadowRoot.querySelector('span'), n=s.getBoundingClientRect().width; if(n) s.style.transform=`scaleX(${(+this.a('w')/n).toFixed(4)})`; }
}
Object.entries({'desktop-screen':DesktopScreen,'tab-strip':TabStrip,'browser-tab':BrowserTab,'address-bar':AddressBar,'bookmark-bar':BookmarkBar,'site-topbar':SiteTopbar,'site-header':SiteHeader,'site-nav':SiteNav,'payment-message':PaymentMessage,'site-newsletter':SiteNewsletter,'site-copyright':SiteCopyright,'chat-launcher':ChatLauncher,'task-bar':TaskBar,'task-app':TaskApp,'ui-icon':UiIcon,'fit-text':FitText}).forEach(([n,c])=>customElements.define(n,c));
</script>
</body>
</html>
